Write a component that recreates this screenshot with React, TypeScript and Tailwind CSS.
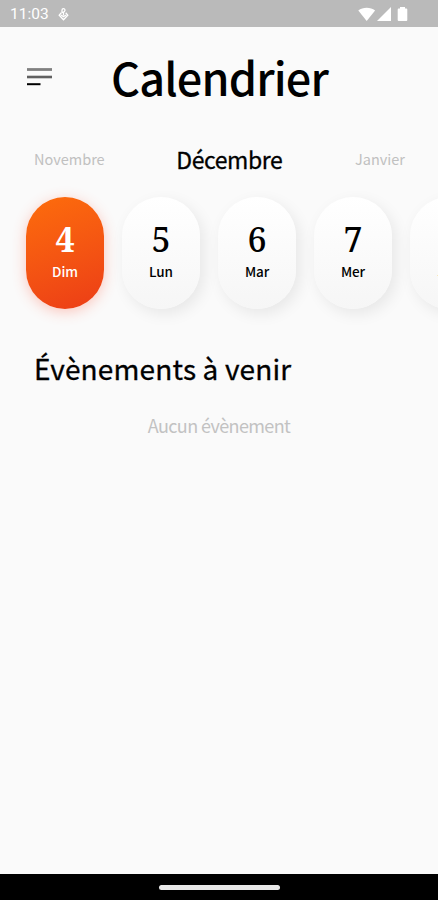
const days = [
  { number: 4, label: "Dim", active: true },
  { number: 5, label: "Lun", active: false },
  { number: 6, label: "Mar", active: false },
  { number: 7, label: "Mer", active: false },
  { number: 8, label: "Jeu", active: false }
];

function StatusBar() {
  return (
    <div className="flex h-[27px] items-center justify-between bg-[#bababa] pt-[2px] pr-[30px] pl-[10px] text-white">
      <div className="flex items-center gap-[9px]">
        <span className="font-['Roboto',sans-serif] text-[15.5px] leading-none">11:03</span>
        <svg className="h-[13px] w-[11px]" viewBox="0 0 11 13" fill="none" stroke="currentColor" strokeWidth={1.3} aria-hidden="true">
          <path d="M4 5V2.200a1.500 1.500 0 0 1 3 0c0 1.200-1 1.800-2.500 2.400M5.500 4.500v3" />
          <path d="M3.300 4.800L1.200 7.200 5.500 11.700 9.800 7.200 7.700 4.800M3 7l2.500 1.800L8 7" />
        </svg>
      </div>
      <svg className="h-[15px] w-[50px]" viewBox="0 0 50 15" fill="currentColor" aria-hidden="true">
        <path d="M.3 3.500C4.800-.2 12.600-.2 17.100 3.500L8.700 14z" />
        <path d="M33 0v14H19z" />
        <path d="M42 0h5v1.500h1.300q1 0 1 1V13q0 1-1 1h-7.600q-1 0-1-1V2.500q0-1 1-1H42z" />
      </svg>
    </div>
  );
}

function Header() {
  return (
    <header className="flex h-[100px] items-center pl-[27px]">
      <button type="button" className="block" aria-label="Menu">
        <svg className="h-[18px] w-[25px]" viewBox="0 0 25 18" aria-hidden="true">
          <path d="M0 1.500h25" stroke="#808080" strokeWidth={2.800} />
          <path d="M0 9h25" stroke="#606060" strokeWidth={2.600} />
          <path d="M0 16.200h13.500" stroke="#000" strokeWidth={2} />
        </svg>
      </button>
      <h1 className="ml-[59px] pb-[2px] text-[45px] leading-none font-medium tracking-[-0.85px]">Calendrier</h1>
    </header>
  );
}

function DayCard({ number, label, active }: { number: number; label: string; active: boolean }) {
  return (
    <li
      className={`flex h-[112px] w-[78px] shrink-0 flex-col items-center rounded-full pt-[23px] ${
        active
          ? "bg-linear-160 from-[#fd6c0b] to-[#ec3c16] text-white shadow-[0_3px_14px_rgba(255,80,50,0.3)]"
          : "bg-linear-to-b from-white to-[#f6f6f6] text-black shadow-[4px_5px_15px_rgba(0,0,0,0.08)]"
      }`}
    >
      <span className={`font-['Noto_Serif',serif] text-[34px] leading-[38px] ${active ? "font-bold" : "font-medium"}`}>
        {number}
      </span>
      <span className="text-[13.5px] leading-[26px] font-medium tracking-[-0.1px]">{label}</span>
    </li>
  );
}

export default function App() {
  return (
    <div className="flex h-[900px] w-[438px] flex-col overflow-hidden bg-[#fafafa] font-['Noto_Sans_CJK_SC','Noto_Sans_CJK_JP',sans-serif] text-black">
      <StatusBar />
      <Header />
      <main className="flex-1">
        <div className="flex h-[64px] items-center justify-between pr-[33px] pl-[34px]">
          <span className="text-[14.5px] text-[#c0c0c0]">Novembre</span>
          <span className="pr-[1px] text-[23px] tracking-[-0.4px] [-webkit-text-stroke:0.3px_black]">Décembre</span>
          <span className="text-[14.5px] text-[#c0c0c0]">Janvier</span>
        </div>
        <ul className="mt-[6px] flex gap-[18px] pl-[26px]">
          {days.map((day) => (
            <DayCard key={day.number} {...day} />
          ))}
        </ul>
        <h2 className="mt-[39px] pl-[34px] text-[28px] leading-[40px] font-normal tracking-[0.15px] [-webkit-text-stroke:0.3px_black]">
          Évènements à venir
        </h2>
        <p className="mt-[23px] text-center text-[18px] leading-[28px] tracking-[-0.6px] text-[#c2c2c2]">
          Aucun évènement
        </p>
      </main>
      <footer className="flex h-[26px] items-center justify-center bg-black">
        <div className="h-[5px] w-[121px] rounded-full bg-[#e8e8e8]" />
      </footer>
    </div>
  );
}
